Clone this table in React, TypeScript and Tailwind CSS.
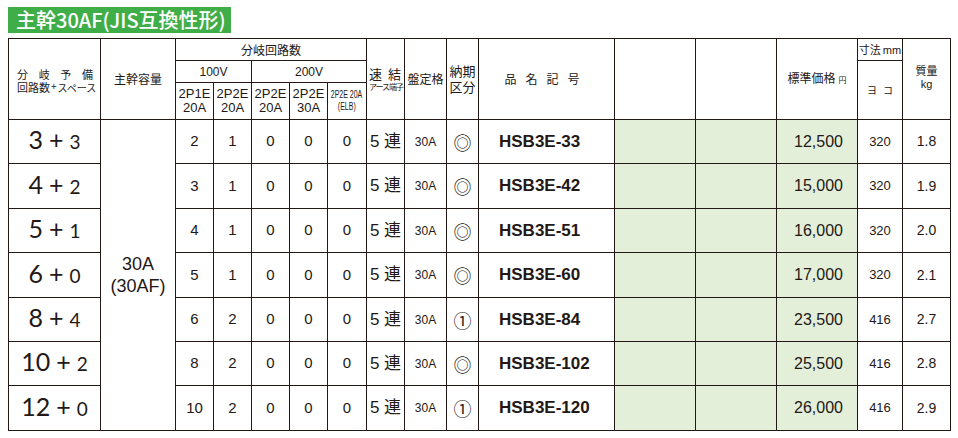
import React from "react";

type Row = {
  main: string;
  spare: string;
  counts: string[];
  mark: string;
  code: string;
  price: string;
  width: string;
  mass: string;
  h: string;
};

const rows: Row[] = [
  { main: "3", spare: "3", counts: ["2", "1", "0", "0", "0"], mark: "◎", code: "HSB3E-33", price: "12,500", width: "320", mass: "1.8", h: "h-[44px]" },
  { main: "4", spare: "2", counts: ["3", "1", "0", "0", "0"], mark: "◎", code: "HSB3E-42", price: "15,000", width: "320", mass: "1.9", h: "h-[45px]" },
  { main: "5", spare: "1", counts: ["4", "1", "0", "0", "0"], mark: "◎", code: "HSB3E-51", price: "16,000", width: "320", mass: "2.0", h: "h-[44px]" },
  { main: "6", spare: "0", counts: ["5", "1", "0", "0", "0"], mark: "◎", code: "HSB3E-60", price: "17,000", width: "320", mass: "2.1", h: "h-[45px]" },
  { main: "8", spare: "4", counts: ["6", "2", "0", "0", "0"], mark: "①", code: "HSB3E-84", price: "23,500", width: "416", mass: "2.7", h: "h-[44px]" },
  { main: "10", spare: "2", counts: ["8", "2", "0", "0", "0"], mark: "◎", code: "HSB3E-102", price: "25,500", width: "416", mass: "2.8", h: "h-[44px]" },
  { main: "12", spare: "0", counts: ["10", "2", "0", "0", "0"], mark: "①", code: "HSB3E-120", price: "26,000", width: "416", mass: "2.9", h: "h-[45px]" },
];

const cell = "border border-[#231815] p-0 text-center align-middle";

export default function App() {
  return (
    <div className="bg-white w-[958px] h-[438px] pl-[8px] pt-[7px] text-[#231815] font-['Liberation_Sans','Noto_Sans_CJK_JP',sans-serif]">
      <div className="w-[223px] h-[26px] bg-[#3fae49] text-white text-[20px] leading-[26px] pl-[8px] font-['Noto_Sans_CJK_JP',sans-serif] font-medium whitespace-nowrap">
        主幹30AF(JIS互換性形)
      </div>

      <table className="mt-[5px] w-[942px] table-fixed border-collapse">
        <colgroup>
          <col className="w-[92px]" />
          <col className="w-[75px]" />
          <col className="w-[38px]" />
          <col className="w-[38px]" />
          <col className="w-[38px]" />
          <col className="w-[38px]" />
          <col className="w-[39px]" />
          <col className="w-[38px]" />
          <col className="w-[42px]" />
          <col className="w-[32px]" />
          <col className="w-[136px]" />
          <col className="w-[81px]" />
          <col className="w-[81px]" />
          <col className="w-[81px]" />
          <col className="w-[45px]" />
          <col className="w-[48px]" />
        </colgroup>
        <thead className="font-['Noto_Sans_CJK_JP',sans-serif] text-[12px] leading-[14px]">
          <tr className="h-[22px]">
            <th rowSpan={3} className={`${cell} font-normal`}>
              <div className="flex flex-col items-start pl-[8px] pt-[3px] text-[11px] leading-[13px] whitespace-nowrap">
                <div className="flex w-[76px] justify-between">
                  <span>分</span>
                  <span>岐</span>
                  <span>予</span>
                  <span>備</span>
                </div>
                <div className="flex items-start">
                  <span>回路数</span>
                  <span className="mx-[1px] text-[10px] leading-[9px]">+</span>
                  <span className="text-[10px] leading-[13px]">スペース</span>
                </div>
              </div>
            </th>
            <th rowSpan={3} className={`${cell} font-normal`}>主幹容量</th>
            <th colSpan={5} className={`${cell} font-normal`}>分岐回路数</th>
            <th rowSpan={3} className={`${cell} font-normal`}>
              <div className="flex flex-col items-start pl-[2px]">
                <div className="flex w-[32px] justify-between text-[13px] leading-[15px]">
                  <span>速</span>
                  <span>結</span>
                </div>
                <span className="whitespace-nowrap text-[8px] leading-[12px] tracking-[-1px]">アース端子</span>
              </div>
            </th>
            <th rowSpan={3} className={`${cell} font-normal text-[12px] whitespace-nowrap`}>盤定格</th>
            <th rowSpan={3} className={`${cell} font-normal text-[13px] leading-[16px]`}>
              納期
              <br />
              区分
            </th>
            <th rowSpan={3} className={`${cell} font-normal`}>
              <span className="tracking-[9px]">品名記号</span>
            </th>
            <th rowSpan={3} className={cell}></th>
            <th rowSpan={3} className={cell}></th>
            <th rowSpan={3} className={`${cell} font-normal`}>
              標準価格<span className="ml-[3px] text-[8px]">円</span>
            </th>
            <th className={`${cell} font-normal text-[11px] whitespace-nowrap`}>
              寸法<span className="font-['Liberation_Sans',sans-serif] ml-[2px]">mm</span>
            </th>
            <th rowSpan={3} className={`${cell} font-normal text-[11px] leading-[13px]`}>
              <div className="pb-[4px]">
                質量
                <br />
                <span className="font-['Liberation_Sans',sans-serif]">kg</span>
              </div>
            </th>
          </tr>
          <tr className="h-[22px]">
            <th colSpan={2} className={`${cell} font-normal font-['Liberation_Sans',sans-serif] text-[12px]`}>100V</th>
            <th colSpan={3} className={`${cell} font-normal font-['Liberation_Sans',sans-serif] text-[12px]`}>200V</th>
            <th rowSpan={2} className={`${cell} font-normal text-[10px]`}>
              <div className="flex justify-between px-[9px]">
                <span>ヨ</span>
                <span>コ</span>
              </div>
            </th>
          </tr>
          <tr className="h-[37px] font-['Liberation_Sans',sans-serif] text-[13px] leading-[14px]">
            <th className={`${cell} font-normal`}>2P1E<br />20A</th>
            <th className={`${cell} font-normal`}>2P2E<br />20A</th>
            <th className={`${cell} font-normal`}>2P2E<br />20A</th>
            <th className={`${cell} font-normal`}>2P2E<br />30A</th>
            <th className={`${cell} font-normal`}>
              <div className="flex flex-col items-center text-[10px] leading-[12px]">
                <span className="inline-block scale-x-[0.7] whitespace-nowrap">2P2E 20A</span>
                <span className="inline-block scale-x-[0.7]">(ELB)</span>
              </div>
            </th>
          </tr>
        </thead>
        <tbody>
          {rows.map((r, i) => (
            <tr key={r.code} className={r.h}>
              <td className={cell}>
                <span className="font-['Lato',sans-serif] text-[25px] leading-none whitespace-nowrap">
                  {r.main}
                  <span className="mx-[6px]">+</span>
                  <span className="text-[19px]">{r.spare}</span>
                </span>
              </td>
              {i === 0 && (
                <td rowSpan={7} className={`${cell} text-[18px] leading-[22px]`}>
                  30A
                  <br />
                  (30AF)
                </td>
              )}
              {r.counts.map((c, j) => (
                <td key={j} className={`${cell} text-[15px]`}>
                  {c}
                </td>
              ))}
              <td className={`${cell} text-[17px] whitespace-nowrap`}>5 連</td>
              <td className={`${cell} text-[12px]`}>30A</td>
              <td className={`${cell} text-[18px] leading-none font-['Noto_Sans_CJK_JP',sans-serif]`}>{r.mark}</td>
              <td className={`${cell} text-left pl-[20px] text-[17px] font-bold`}>{r.code}</td>
              <td className={`${cell} bg-[#e3efd9]`}></td>
              <td className={`${cell} bg-[#e3efd9]`}></td>
              <td className={`${cell} bg-[#e3efd9] text-right pr-[14px] text-[16px]`}>{r.price}</td>
              <td className={`${cell} text-[13px]`}>{r.width}</td>
              <td className={`${cell} text-[14px]`}>{r.mass}</td>
            </tr>
          ))}
        </tbody>
      </table>
    </div>
  );
}
